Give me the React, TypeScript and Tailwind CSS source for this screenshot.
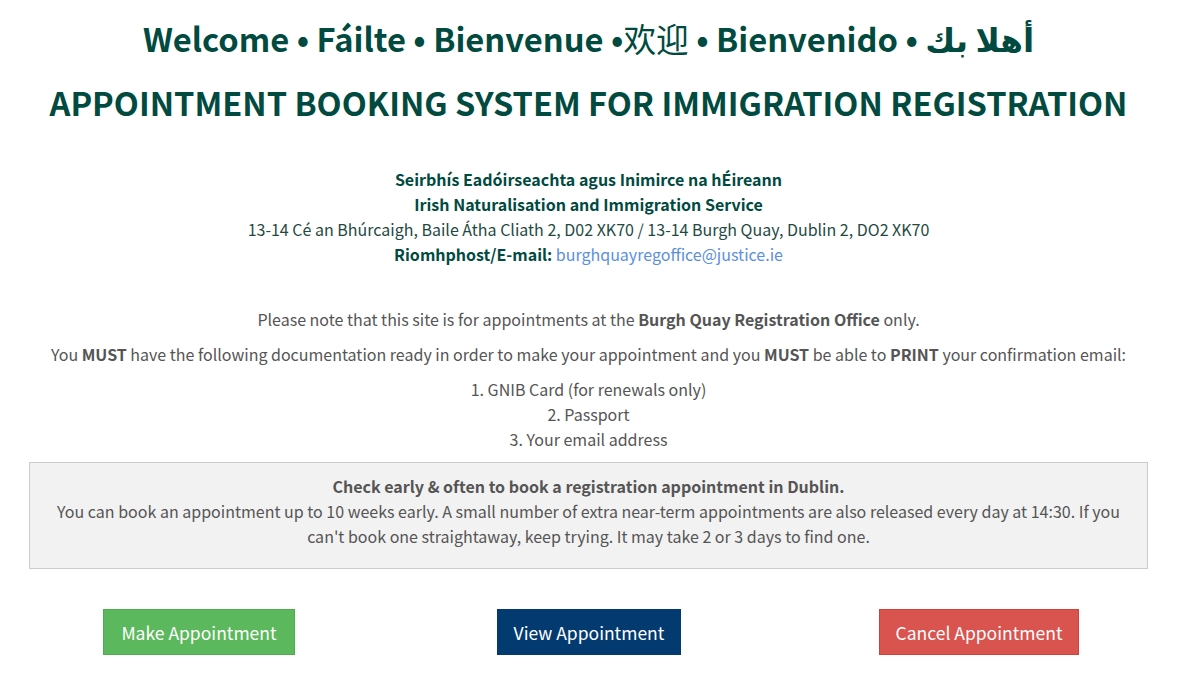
import React from "react";

const font = { fontFamily: '"Noto Sans CJK KR", "Noto Sans CJK SC", "DejaVu Sans", sans-serif' };

export default function App() {
  return (
    <div className="w-[1177px] bg-white text-[#555] text-[16px] leading-[25px]" style={font}>
      <div className="text-center text-[#004a3f] font-bold">
        <h1 className="pt-[16px] text-[32.7px] leading-[44px]">
          Welcome • Fáilte • Bienvenue •<span className="font-normal" style={{ fontFamily: '"Noto Sans CJK SC", sans-serif' }}>欢迎</span> • Bienvenido • أهلا بك
        </h1>
        <h2 className="mt-[20px] text-[32.6px] leading-[44px]">APPOINTMENT BOOKING SYSTEM FOR IMMIGRATION REGISTRATION</h2>
      </div>

      <div className="mt-[43px] text-center">
        <div className="font-bold text-[#004a3f]">Seirbhís Eadóirseachta agus Inimirce na hÉireann</div>
        <div className="font-bold text-[#004a3f]">Irish Naturalisation and Immigration Service</div>
        <div className="text-[#1f4a44]">13-14 Cé an Bhúrcaigh, Baile Átha Cliath 2, D02 XK70 / 13-14 Burgh Quay, Dublin 2, DO2 XK70</div>
        <div>
          <span className="font-bold text-[#004a3f]">Riomhphost/E-mail:</span>{" "}
          <a className="text-[#5b8fe0]">burghquayregoffice@justice.ie</a>
        </div>
      </div>

      <p className="mt-[40px] text-center">
        Please note that this site is for appointments at the <b>Burgh Quay Registration Office</b> only.
      </p>
      <p className="mt-[10px] text-center">
        You <b>MUST</b> have the following documentation ready in order to make your appointment and you <b>MUST</b> be able to <b>PRINT</b> your confirmation email:
      </p>
      <div className="mt-[10px] text-center">
        <div>1. GNIB Card (for renewals only)</div>
        <div>2. Passport</div>
        <div>3. Your email address</div>
      </div>

      <div className="mx-[29px] mt-[10px] border border-[#cccccc] bg-[#f2f2f2] px-[20px] pt-[11px] pb-[19px] text-center">
        <div className="font-bold">Check early &amp; often to book a registration appointment in Dublin.</div>
        <div>
          You can book an appointment up to 10 weeks early. A small number of extra near-term appointments are also released every day at 14:30. If you can't book one straightaway, keep trying. It may take 2 or 3 days to find one.
        </div>
      </div>

      <div className="mt-[40px] ml-[4px] grid grid-cols-3 w-[1170px] pb-[26px]">
        <div className="flex justify-center">
          <button className="h-[46px] px-[17px] bg-[#5cb85c] border border-[#4cae4c] text-white text-[17.5px]">Make Appointment</button>
        </div>
        <div className="flex justify-center">
          <button className="h-[46px] px-[16px] bg-[#033b70] border border-[#033b70] text-white text-[17.5px]">View Appointment</button>
        </div>
        <div className="flex justify-center">
          <button className="h-[46px] px-[16px] bg-[#d9534f] border border-[#d43f3a] text-white text-[17.5px]">Cancel Appointment</button>
        </div>
      </div>
    </div>
  );
}
